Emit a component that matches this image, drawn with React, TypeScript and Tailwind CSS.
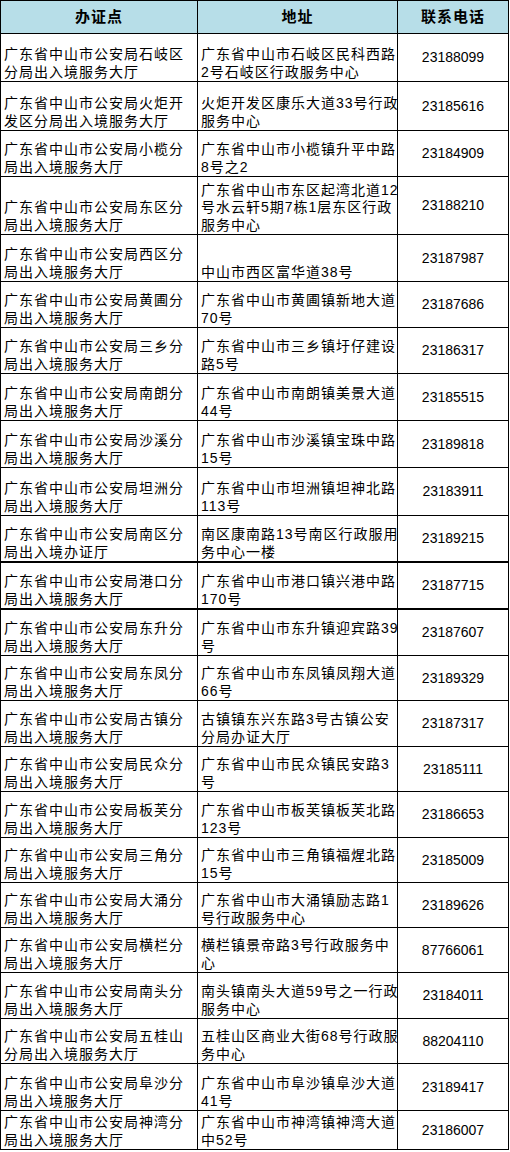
type Office = {
  name: string[];
  address: string[];
  phone: string;
  h: string;
  thick?: boolean;
};

// row heights follow the sheet's line positions
const offices: Office[] = [
  { name: ["广东省中山市公安局石岐区", "分局出入境服务大厅"], address: ["广东省中山市石岐区民科西路", "2号石岐区行政服务中心"], phone: "23188099", h: "h-[48px]" },
  { name: ["广东省中山市公安局火炬开", "发区分局出入境服务大厅"], address: ["火炬开发区康乐大道33号行政", "服务中心"], phone: "23185616", h: "h-[49px]" },
  { name: ["广东省中山市公安局小榄分", "局出入境服务大厅"], address: ["广东省中山市小榄镇升平中路", "8号之2"], phone: "23184909", h: "h-[46px]" },
  { name: ["广东省中山市公安局东区分", "局出入境服务大厅"], address: ["广东省中山市东区起湾北道12", "号水云轩5期7栋1层东区行政", "服务中心"], phone: "23188210", h: "h-[58px]" },
  { name: ["广东省中山市公安局西区分", "局出入境服务大厅"], address: ["中山市西区富华道38号"], phone: "23187987", h: "h-[47px]" },
  { name: ["广东省中山市公安局黄圃分", "局出入境服务大厅"], address: ["广东省中山市黄圃镇新地大道", "70号"], phone: "23187686", h: "h-[46px]" },
  { name: ["广东省中山市公安局三乡分", "局出入境服务大厅"], address: ["广东省中山市三乡镇圩仔建设", "路5号"], phone: "23186317", h: "h-[46px]" },
  { name: ["广东省中山市公安局南朗分", "局出入境服务大厅"], address: ["广东省中山市南朗镇美景大道", "44号"], phone: "23185515", h: "h-[47px]" },
  { name: ["广东省中山市公安局沙溪分", "局出入境服务大厅"], address: ["广东省中山市沙溪镇宝珠中路", "15号"], phone: "23189818", h: "h-[47px]" },
  { name: ["广东省中山市公安局坦洲分", "局出入境服务大厅"], address: ["广东省中山市坦洲镇坦神北路", "113号"], phone: "23183911", h: "h-[48px]" },
  { name: ["广东省中山市公安局南区分", "局出入境办证厅"], address: ["南区康南路13号南区行政服用", "务中心一楼"], phone: "23189215", h: "h-[47px]", thick: true },
  { name: ["广东省中山市公安局港口分", "局出入境服务大厅"], address: ["广东省中山市港口镇兴港中路", "170号"], phone: "23187715", h: "h-[47px]", thick: true },
  { name: ["广东省中山市公安局东升分", "局出入境服务大厅"], address: ["广东省中山市东升镇迎宾路39", "号"], phone: "23187607", h: "h-[46px]" },
  { name: ["广东省中山市公安局东凤分", "局出入境服务大厅"], address: ["广东省中山市东凤镇凤翔大道", "66号"], phone: "23189329", h: "h-[45px]" },
  { name: ["广东省中山市公安局古镇分", "局出入境服务大厅"], address: ["古镇镇东兴东路3号古镇公安", "分局办证大厅"], phone: "23187317", h: "h-[46px]" },
  { name: ["广东省中山市公安局民众分", "局出入境服务大厅"], address: ["广东省中山市民众镇民安路3", "号"], phone: "23185111", h: "h-[45px]" },
  { name: ["广东省中山市公安局板芙分", "局出入境服务大厅"], address: ["广东省中山市板芙镇板芙北路", "123号"], phone: "23186653", h: "h-[46px]" },
  { name: ["广东省中山市公安局三角分", "局出入境服务大厅"], address: ["广东省中山市三角镇福煋北路", "15号"], phone: "23185009", h: "h-[45px]" },
  { name: ["广东省中山市公安局大涌分", "局出入境服务大厅"], address: ["广东省中山市大涌镇励志路1", "号行政服务中心"], phone: "23189626", h: "h-[45px]" },
  { name: ["广东省中山市公安局横栏分", "局出入境服务大厅"], address: ["横栏镇景帝路3号行政服务中", "心"], phone: "87766061", h: "h-[45px]" },
  { name: ["广东省中山市公安局南头分", "局出入境服务大厅"], address: ["南头镇南头大道59号之一行政", "服务中心"], phone: "23184011", h: "h-[46px]" },
  { name: ["广东省中山市公安局五桂山", "分局出入境服务大厅"], address: ["五桂山区商业大街68号行政服", "务中心"], phone: "88204110", h: "h-[45px]" },
  { name: ["广东省中山市公安局阜沙分", "局出入境服务大厅"], address: ["广东省中山市阜沙镇阜沙大道", "41号"], phone: "23189417", h: "h-[47px]" },
  { name: ["广东省中山市公安局神湾分", "局出入境服务大厅"], address: ["广东省中山市神湾镇神湾大道", "中52号"], phone: "23186007", h: "h-[39px]" },
];

function TextCell({ lines, last }: { lines: string[]; last?: boolean }) {
  return (
    <div
      className={`flex flex-col justify-end pl-[3px] ${
        last ? "" : "border-r border-black"
      }`}
    >
      {lines.map((l) => (
        <div key={l} className="whitespace-nowrap text-[14px] leading-[17.5px] tracking-[1px]">
          {l}
        </div>
      ))}
    </div>
  );
}

export default function App() {
  return (
    <div className="min-h-[1152px] bg-white font-['Liberation_Sans','Noto_Sans_CJK_SC',sans-serif] text-black">
      <div className="w-[509px] border-l border-t border-black">
        {/* header */}
        <div className="grid h-[33px] grid-cols-[197px_200px_111px] border-b border-black bg-[#b7dee8] text-[15px] font-bold tracking-[1px]">
          <div className="flex items-center justify-center border-r border-black">办证点</div>
          <div className="flex items-center justify-center border-r border-black">地址</div>
          <div className="flex items-center justify-center border-r border-black">联系电话</div>
        </div>

        {offices.map((o) => (
          <div
            key={o.phone}
            className={`grid grid-cols-[197px_200px_111px] border-black ${o.h} ${
              o.thick ? "border-b-2" : "border-b"
            }`}
          >
            <TextCell lines={o.name} />
            <TextCell lines={o.address} />
            <div className="flex items-center justify-center border-r border-black text-[14px]">
              {o.phone}
            </div>
          </div>
        ))}
      </div>
    </div>
  );
}
